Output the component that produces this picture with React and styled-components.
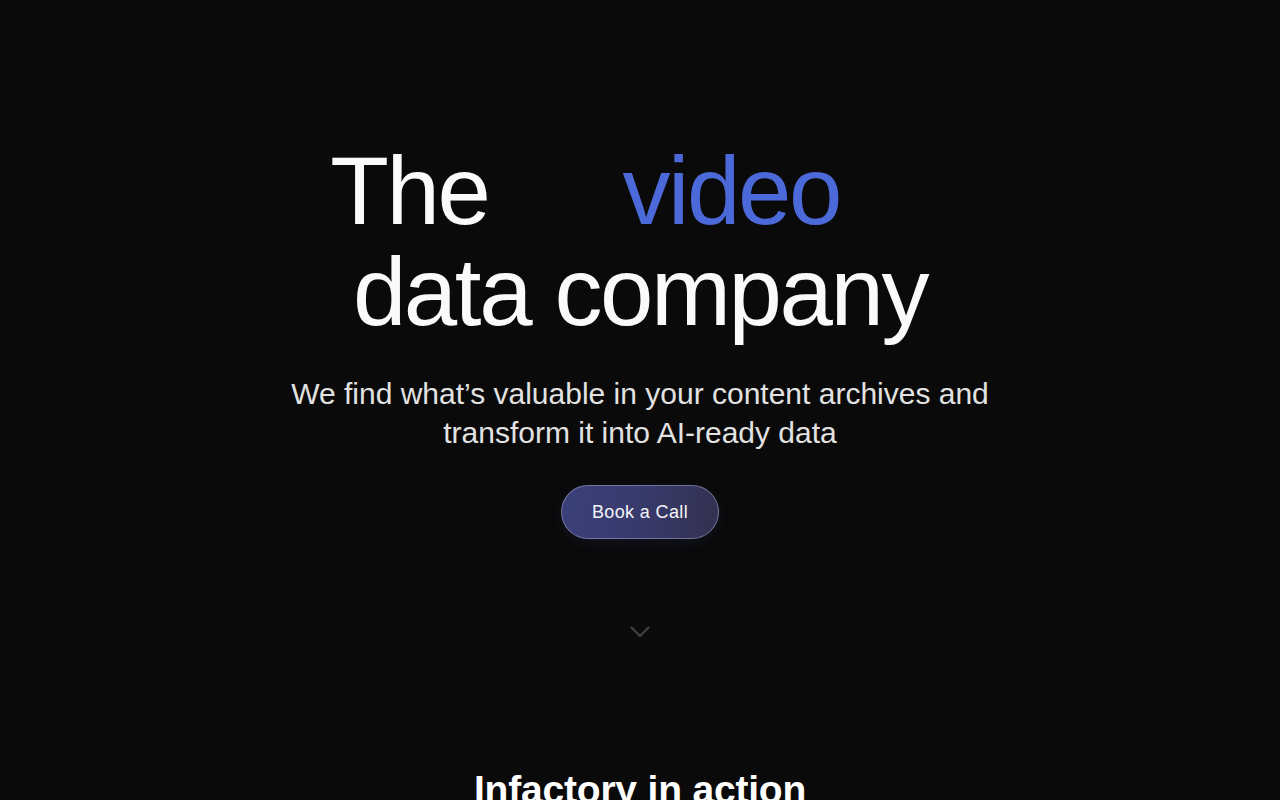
import React from 'react'
import styled, { createGlobalStyle } from 'styled-components'

const GlobalStyle = createGlobalStyle`
  html, body {
    margin: 0;
    padding: 0;
    background: #0a0a0a;
  }
  body {
    font-family: "Liberation Sans", Arial, sans-serif;
    color: #fafafa;
    overflow: hidden;
  }
`

const Page = styled.div`
  min-height: 800px;
  background: #0a0a0a;
`

const Hero = styled.section`
  display: flex;
  flex-direction: column;
  align-items: center;
  padding-top: 141px;
  text-align: center;
`

const Title = styled.h1`
  margin: 0;
  font-size: 96px;
  font-weight: 400;
  line-height: 100.5px;
  letter-spacing: -0.025em;
  color: #fafafa;
`

const TitleLine = styled.span`
  display: block;
  white-space: nowrap;
`

const Rotator = styled.span`
  display: inline-block;
  width: 437px;
  text-align: center;
  color: #4b69d8;
`

const Subtitle = styled.p`
  margin: 32px 0 0;
  max-width: 720px;
  font-size: 30px;
  line-height: 39px;
  color: #e2e2e2;
`

const CallButton = styled.button`
  margin-top: 33px;
  height: 54px;
  padding: 0 30px;
  border-radius: 27px;
  border: 1px solid rgba(190, 190, 230, 0.45);
  background: linear-gradient(100deg, #3b4079 0%, #383b6e 45%, #33304f 100%);
  box-shadow: 0 4px 14px rgba(60, 70, 150, 0.15);
  color: #f4f4f8;
  font-family: "Liberation Sans", Arial, sans-serif;
  font-size: 18px;
  letter-spacing: 0.02em;
  cursor: pointer;
`

const ScrollHint = styled.div`
  margin-top: 87px;
  display: flex;
  justify-content: center;
  color: #414141;
`

const Section = styled.section`
  padding-top: 130px;
  text-align: center;
`

const SectionTitle = styled.h2`
  margin: 0;
  font-size: 39px;
  font-weight: 700;
  line-height: 44px;
  letter-spacing: -0.005em;
  color: #ffffff;
`

function ChevronDown () {
  return (
    <svg width='20' height='12' viewBox='0 0 20 12' fill='none'>
      <polyline points='1.5,1.5 10,10 18.5,1.5' stroke='currentColor' strokeWidth='2.2' strokeLinecap='round' strokeLinejoin='round' />
    </svg>
  )
}

export default function App () {
  return (
    <Page>
      <GlobalStyle />
      <Hero>
        <Title>
          <TitleLine>The <Rotator>video</Rotator></TitleLine>
          <TitleLine>data company</TitleLine>
        </Title>
        <Subtitle>
          We find what’s valuable in your content archives and transform it into AI-ready data
        </Subtitle>
        <CallButton>Book a Call</CallButton>
        <ScrollHint>
          <ChevronDown />
        </ScrollHint>
      </Hero>
      <Section>
        <SectionTitle>Infactory in action</SectionTitle>
      </Section>
    </Page>
  )
}
